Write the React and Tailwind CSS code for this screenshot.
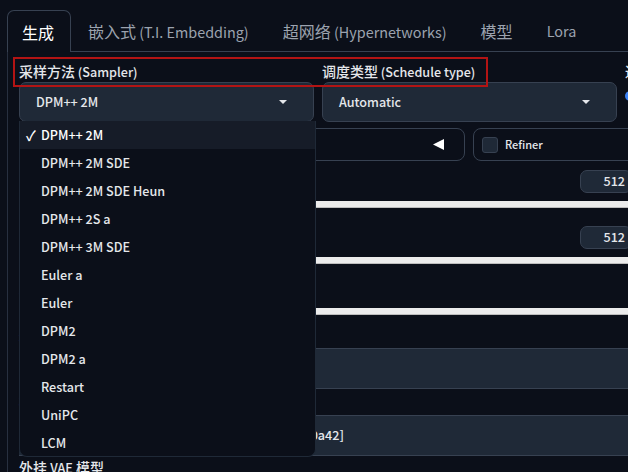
import React from 'react';

// Noto Sans CJK's latin glyphs run ~11% larger than the original UI font,
// so latin text is set at 0.9x and CJK runs are wrapped back to full size.
const tabs = [
  [<span key="a" className="text-[16px]">嵌入式</span>, ' (T.I. Embedding)'],
  [<span key="a" className="text-[16px]">超网络</span>, ' (Hypernetworks)'],
  [<span key="a" className="text-[16px]">模型</span>],
  ['Lora'],
];

const samplers = [
  'DPM++ 2M',
  'DPM++ 2M SDE',
  'DPM++ 2M SDE Heun',
  'DPM++ 2S a',
  'DPM++ 3M SDE',
  'Euler a',
  'Euler',
  'DPM2',
  'DPM2 a',
  'Restart',
  'UniPC',
  'LCM',
];

function Caret() {
  return (
    <svg width="8" height="4" viewBox="0 0 8 4" className="shrink-0">
      <polygon points="0,0 8,0 4,4" fill="#e5e7eb" />
    </svg>
  );
}

function Label({ cjk, latin, className = '' }) {
  return (
    <div className={`h-[18px] leading-[18px] text-[12.6px] font-medium ${className}`}>
      <span className="text-[14px]">{cjk}</span>
      {latin}
    </div>
  );
}

function Select({ value }) {
  return (
    <div className="h-[40px] rounded-[7px] bg-[#1f2937] border border-[#374151] flex items-center justify-between pl-[16px] pr-[26px] text-[12.6px] font-medium text-[#e5e7eb]">
      <span>{value}</span>
      <Caret />
    </div>
  );
}

function Slider({ cjk, latin, className = '' }) {
  return (
    <div className={`w-[613px] shrink-0 ${className}`}>
      <div className="h-[23px] flex items-center justify-between">
        <Label cjk={cjk} latin={latin} />
        <div className="w-[52px] h-[23px] rounded-[7px] bg-[#1f2937] border border-[#374151] flex items-center justify-end pr-[6px] text-[12.6px] font-medium">
          512
        </div>
      </div>
      <div className="mt-[8px] h-[7px] bg-[#ececec] border-b border-[#bdbdbd]" />
    </div>
  );
}

export default function App() {
  return (
    <div className="relative w-[628px] h-[472px] overflow-hidden bg-[#0b0f19] font-['Noto_Sans_CJK_SC',sans-serif] text-[#e5e7eb] whitespace-nowrap">
      {/* tab bar */}
      <div className="flex pl-[7px] pt-[10px]">
        <div className="h-[42px] pl-[14px] pr-[16px] flex items-center border border-b-0 border-[#374151] rounded-t-[7px] text-white text-[16px]">
          生成
        </div>
        <div className="flex-1 flex items-center border-b border-[#374151] text-[14.4px] text-[#9ca3af]">
          {tabs.map((t, i) => (
            <div key={i} className="px-[17px]">{t}</div>
          ))}
        </div>
      </div>

      {/* panel */}
      <div className="ml-[7px] border-l border-[#283040] pl-[11px] pt-[10px] flex flex-col">
        <div className="flex gap-[8px] shrink-0">
          <div className="w-[295px] shrink-0">
            <Label cjk="采样方法" latin=" (Sampler)" className="mb-[2px]" />
            <Select value="DPM++ 2M" />
          </div>
          <div className="w-[295px] shrink-0">
            <Label cjk="调度类型" latin=" (Schedule type)" className="mb-[2px]" />
            <Select value="Automatic" />
          </div>
          <div className="shrink-0">
            <Label cjk="迭代步数" latin=" (Steps)" className="mb-[2px]" />
            <div className="mt-[11px] w-[10px] h-[10px] rounded-full bg-[#3b82f6]" />
          </div>
        </div>

        <div className="mt-[6px] flex gap-[8px] h-[33px] shrink-0">
          <div className="w-[446px] shrink-0 border border-[#374151] rounded-[8px] flex items-center justify-between pl-[12px] pr-[20px]">
            <Label cjk="高分辨率修复" latin=" (Hires. fix)" />
            <svg width="11" height="11" viewBox="0 0 11 11">
              <polygon points="0,5.5 11,0 11,11" fill="#ffffff" />
            </svg>
          </div>
          <div className="w-[200px] shrink-0 border border-[#374151] rounded-[8px] flex items-center pl-[8px] gap-[7px] text-[11px] font-medium">
            <div className="w-[16px] h-[16px] rounded-[3px] bg-[#1f2937] border border-[#374151]" />
            <span>Refiner</span>
          </div>
        </div>

        <Slider cjk="宽度" latin=" (Width)" className="mt-[9px]" />
        <Slider cjk="高度" latin=" (Height)" className="mt-[18px]" />

        <div className="mt-[11px] w-[700px] shrink-0">
          <div className="h-[23px] flex items-center">
            <Label cjk="总批次数" latin=" (Batch count)" />
          </div>
          <div className="mt-[10px] h-[7px] bg-[#ececec] border-b border-[#bdbdbd]" />
        </div>

        <Label cjk="提示词引导系数" latin=" (CFG Scale)" className="mt-[14px] shrink-0" />
        <div className="mt-[1px] w-[700px] h-[41px] shrink-0 bg-[#1f2937] border-y border-[#374151]" />

        <Label cjk="模型" latin=" (Stable Diffusion checkpoint)" className="mt-[3px] shrink-0" />
        <div className="mt-[5px] w-[700px] h-[41px] shrink-0 bg-[#1f2937] border-y border-[#374151] flex items-center pl-[15px] text-[12.6px] font-medium">
          anything-v5-PrtRE-fp16.safetensors [7f96a1a90a42]
        </div>

        <div className="mt-[1px] h-[20px] leading-[20px] text-[14px] font-medium shrink-0">
          外挂 <span className="text-[12.6px]">VAE</span> 模型
        </div>
      </div>

      {/* annotation */}
      <div className="absolute left-[13px] top-[57px] w-[475px] h-[30px] border-2 border-[#b31414]" />

      {/* open sampler menu */}
      <div className="absolute left-[19px] top-[121px] w-[297px] h-[336px] bg-[#0b0f19] border border-t-0 border-[#1f2937] rounded-b-[8px] overflow-hidden">
        {samplers.map((s, i) => (
          <div
            key={s}
            className={`h-[28px] flex items-center text-[12.6px] font-medium ${i === 0 ? 'bg-[#161c28] text-white' : 'text-[#e5e7eb]'}`}
          >
            <span className="w-[21px] pl-[6px] text-[14px]">{i === 0 ? '✓' : ''}</span>
            <span>{s}</span>
          </div>
        ))}
      </div>
    </div>
  );
}
